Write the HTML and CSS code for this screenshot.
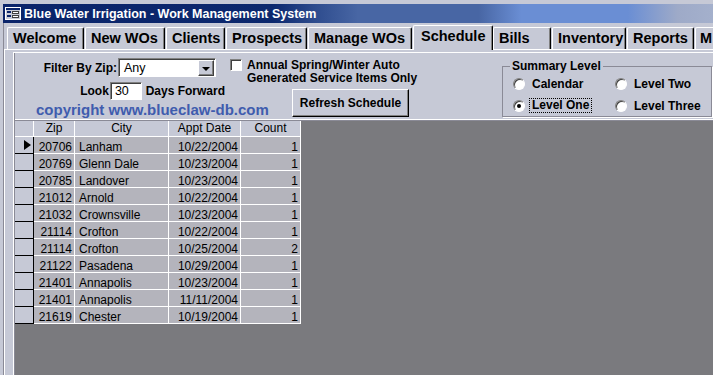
FILE: index.html
```html
<!DOCTYPE html>
<html lang="en">
<head>
  <meta charset="UTF-8" />
  <title>Blue Water Irrigation - Work Management System</title>
  <link rel="stylesheet" href="styles.css">
</head>
<body>
  <div class="window">
    <!-- Title bar -->
    <div class="titlebar">
      <svg class="app-icon" width="16" height="13" viewBox="0 0 16 13">
        <rect x="0.5" y="0.5" width="15" height="12" fill="#c8ccd8" stroke="#ffffff"/>
        <rect x="1" y="1" width="14" height="2" fill="#0a246a"/>
        <rect x="2" y="4" width="4" height="2" fill="#0a246a"/>
        <rect x="2" y="8" width="4" height="2" fill="#0a246a"/>
        <rect x="7.5" y="4.5" width="6" height="2" fill="#ffffff" stroke="#404040"/>
        <rect x="7.5" y="8.5" width="6" height="2" fill="#ffffff" stroke="#404040"/>
      </svg>
      <span class="title-text">Blue Water Irrigation - Work Management System</span>
    </div>

    <div class="client">
      <!-- Tabs -->
      <div class="tabs">
        <div class="tab tab-welcome">Welcome</div>
        <div class="tab tab-new">New WOs</div>
        <div class="tab tab-clients">Clients</div>
        <div class="tab tab-prospects">Prospects</div>
        <div class="tab tab-manage">Manage WOs</div>
        <div class="tab tab-schedule active">Schedule</div>
        <div class="tab tab-bills">Bills</div>
        <div class="tab tab-inventory">Inventory</div>
        <div class="tab tab-reports">Reports</div>
        <div class="tab tab-more">M</div>
      </div>

      <!-- Tab page -->
      <div class="panel">
        <div class="form">
          <div class="form-body">
            <div class="form-header">
              <div class="filters">
                <div class="field">
                  <span class="field-label">Filter By Zip:</span>
                  <div class="combo">
                    <span class="combo-value">Any</span>
                    <span class="combo-btn"><span class="arrow-down"></span></span>
                  </div>
                </div>
                <div class="field field-look">
                  <span class="field-label">Look</span>
                  <div class="textbox">30</div>
                  <span class="field-suffix">Days Forward</span>
                </div>
                <div class="copyright">copyright www.blueclaw-db.com</div>
              </div>

              <div class="options">
                <div class="check-row">
                  <span class="checkbox"></span>
                  <span class="check-label">Annual Spring/Winter Auto<br>Generated Service Items Only</span>
                </div>
                <button class="refresh-btn">Refresh Schedule</button>
              </div>

              <fieldset class="summary">
                <legend>Summary Level</legend>
                <div class="radio-grid">
                  <div class="radio-item"><span class="radio"></span><span>Calendar</span></div>
                  <div class="radio-item"><span class="radio"></span><span>Level Two</span></div>
                  <div class="radio-item"><span class="radio checked"></span><span class="focus">Level One</span></div>
                  <div class="radio-item"><span class="radio"></span><span>Level Three</span></div>
                </div>
              </fieldset>
            </div>

            <!-- Datasheet -->
            <div class="sheet-area">
              <table class="sheet">
                <colgroup>
                  <col class="c-sel"><col class="c-zip"><col class="c-city"><col class="c-date"><col class="c-count">
                </colgroup>
                <thead>
                  <tr><th class="sel"></th><th>Zip</th><th>City</th><th>Appt Date</th><th>Count</th></tr>
                </thead>
                <tbody>
                  <tr><td class="sel"><span class="cursor"></span></td><td class="num">20706</td><td>Lanham</td><td class="num">10/22/2004</td><td class="num">1</td></tr>
                  <tr><td class="sel"></td><td class="num">20769</td><td>Glenn Dale</td><td class="num">10/23/2004</td><td class="num">1</td></tr>
                  <tr><td class="sel"></td><td class="num">20785</td><td>Landover</td><td class="num">10/23/2004</td><td class="num">1</td></tr>
                  <tr><td class="sel"></td><td class="num">21012</td><td>Arnold</td><td class="num">10/22/2004</td><td class="num">1</td></tr>
                  <tr><td class="sel"></td><td class="num">21032</td><td>Crownsville</td><td class="num">10/23/2004</td><td class="num">1</td></tr>
                  <tr><td class="sel"></td><td class="num">21114</td><td>Crofton</td><td class="num">10/22/2004</td><td class="num">1</td></tr>
                  <tr><td class="sel"></td><td class="num">21114</td><td>Crofton</td><td class="num">10/25/2004</td><td class="num">2</td></tr>
                  <tr><td class="sel"></td><td class="num">21122</td><td>Pasadena</td><td class="num">10/29/2004</td><td class="num">1</td></tr>
                  <tr><td class="sel"></td><td class="num">21401</td><td>Annapolis</td><td class="num">10/23/2004</td><td class="num">1</td></tr>
                  <tr><td class="sel"></td><td class="num">21401</td><td>Annapolis</td><td class="num">11/11/2004</td><td class="num">1</td></tr>
                  <tr><td class="sel"></td><td class="num">21619</td><td>Chester</td><td class="num">10/19/2004</td><td class="num">1</td></tr>
                </tbody>
              </table>
            </div>
          </div>
        </div>
      </div>
    </div>
  </div>
</body>
</html>
```

FILE: styles.css
```css
/* ---- Global ---- */
html, body {
  margin: 0;
  padding: 0;
  overflow: hidden;
}
body {
  width: 713px;
  height: 375px;
  background: #c6c9d6;
  font-family: "Liberation Sans", Arial, sans-serif;
  color: #000;
}

.window {
  display: flex;
  flex-direction: column;
  height: 375px;
  padding-top: 4px;
  box-sizing: border-box;
}

/* ---- Title bar ---- */
.titlebar {
  display: flex;
  align-items: flex-start;
  height: 19px;
  margin-left: 3px;
  flex-shrink: 0;
  background: linear-gradient(90deg,
    #0a246a 0%, #0c286e 38%, #2e4c8e 44%, #4866a4 50%,
    #4866a4 67%, #6a8ed4 73%, #6a8ed4 88%, #9eaac8 95%, #a4b0cc 100%);
  color: #fff;
  font-weight: bold;
  font-size: 12.5px;
  white-space: nowrap;
}
.app-icon {
  margin: 3px 3px 0 2px;
  flex-shrink: 0;
}
.title-text {
  line-height: 19px;
  margin-top: 1px;
}

/* ---- Client area ---- */
.client {
  flex: 1;
  display: flex;
  flex-direction: column;
  margin-left: 3px;
  border-left: 1px solid #8a8a96;
}

/* ---- Tabs ---- */
.tabs {
  display: flex;
  align-items: flex-end;
  height: 24px;
  margin-top: 2px;
  padding-left: 3px;
  flex-shrink: 0;
}
.tab {
  flex-shrink: 0;
  height: 22px;
  box-sizing: border-box;
  padding: 2px 0 0 5px;
  margin-right: 1px;
  font-size: 14.5px;
  font-weight: bold;
  line-height: 16px;
  white-space: nowrap;
  overflow: hidden;
  background: #c6c9d6;
  border-top: 1px solid #fff;
  border-left: 1px solid #fff;
  border-right: 1px solid #000;
  border-radius: 2px 2px 0 0;
  box-shadow: inset -1px 0 0 #808080;
}
.tab.active {
  position: relative;
  height: 25px;
  margin-bottom: -1px;
  margin-right: 0;
  padding-left: 7px;
}
.tab-welcome   { width: 77px; }
.tab-new       { width: 80px; }
.tab-clients   { width: 59px; }
.tab-prospects { width: 81px; }
.tab-manage    { width: 104px; }
.tab-schedule  { width: 80px; }
.tab-bills     { width: 58px; }
.tab-inventory { width: 74px; }
.tab-reports   { width: 67px; }
.tab-more      { width: 20px; padding-left: 4px; border-right: 0; box-shadow: none; }

/* ---- Tab page ---- */
.panel {
  flex: 1;
  display: flex;
  flex-direction: column;
  border-top: 1px solid #fff;
  border-left: 1px solid #fff;
  padding: 2px 0 0 8px;
}
.form {
  flex: 1;
  display: flex;
  flex-direction: column;
  border-top: 1px solid #fff;
  border-left: 1px solid #fff;
}
.form-body {
  flex: 1;
  display: flex;
  flex-direction: column;
  border-left: 1px solid #8a8a96;
}

/* ---- Form header ---- */
.form-header {
  display: flex;
  height: 66px;
  flex-shrink: 0;
  border-bottom: 1px solid #fff;
  font-size: 12px;
  font-weight: bold;
}

.filters {
  width: 210px;
  padding-top: 5px;
  box-sizing: border-box;
  flex-shrink: 0;
}
.field {
  display: flex;
  align-items: center;
  height: 19px;
}
.field-look {
  height: 18px;
  margin-top: 5px;
}
.field-label {
  width: 102px;
  text-align: right;
  margin-right: 1px;
}
.field-suffix {
  margin-left: 4px;
  white-space: nowrap;
}

.combo {
  display: flex;
  align-items: flex-start;
  justify-content: space-between;
  width: 98px;
  height: 19px;
  box-sizing: border-box;
  background: #fff;
  border: 1px solid;
  border-color: #808080 #fff #fff #808080;
  box-shadow: inset 1px 1px 0 #404040;
}
.combo-value {
  font-weight: normal;
  font-size: 12.5px;
  line-height: 16px;
  padding: 1px 0 0 5px;
}
.combo-btn {
  display: flex;
  align-items: center;
  justify-content: center;
  width: 16px;
  height: 16px;
  box-sizing: border-box;
  margin: 1px 1px 0 0;
  background: #c6c9d6;
  border: 1px solid;
  border-color: #fff #404040 #404040 #fff;
  box-shadow: inset -1px -1px 0 #808080;
}
.arrow-down {
  width: 0;
  height: 0;
  border-top: 4px solid #000;
  border-left: 4px solid transparent;
  border-right: 4px solid transparent;
  margin: 1px 0 0 -1px;
}

.textbox {
  width: 34px;
  height: 18px;
  box-sizing: border-box;
  background: #fff;
  border: 1px solid;
  border-color: #808080 #fff #fff #808080;
  box-shadow: inset 1px 1px 0 #404040;
  font-weight: normal;
  font-size: 12.5px;
  line-height: 16px;
  padding-left: 4px;
}

.copyright {
  margin: 2px 0 0 21px;
  font-size: 15px;
  line-height: 16px;
  color: #3f5cae;
  white-space: nowrap;
}

.options {
  width: 277px;
  padding: 6px 0 0 5px;
  box-sizing: border-box;
  flex-shrink: 0;
}
.check-row {
  display: flex;
  align-items: flex-start;
}
.checkbox {
  width: 12px;
  height: 12px;
  box-sizing: border-box;
  background: #fff;
  border: 1px solid;
  border-color: #808080 #fff #fff #808080;
  box-shadow: inset 1px 1px 0 #404040;
  margin-right: 5px;
}
.check-label {
  line-height: 13px;
  white-space: nowrap;
}
.refresh-btn {
  display: block;
  width: 117px;
  height: 28px;
  margin: 4px 0 0 62px;
  padding: 0;
  font-family: inherit;
  font-size: 12px;
  font-weight: bold;
  color: #000;
  background: #c6c9d6;
  border: 1px solid;
  border-color: #fff #000 #000 #fff;
  box-shadow: inset -1px -1px 0 #808080;
}

/* ---- Summary level group ---- */
.summary {
  width: 210px;
  box-sizing: border-box;
  margin: 6px 0 0 0;
  padding: 0 0 0 10px;
  min-width: 0;
  height: 58px;
  border: 1px solid #8a8a96;
  box-shadow: 1px 1px 0 #fff;
}
.summary legend {
  padding: 0 2px;
  margin-left: -3px;
  line-height: 14px;
}
.radio-grid {
  display: grid;
  grid-template-columns: 102px auto;
  grid-auto-rows: 21px;
  row-gap: 1px;
}
.radio-item {
  display: flex;
  align-items: center;
  white-space: nowrap;
}
.radio {
  width: 12px;
  height: 12px;
  box-sizing: border-box;
  border-radius: 50%;
  background: #fff;
  border: 1px solid;
  border-color: #808080 #fff #fff #808080;
  box-shadow: inset 1px 1px 0 #404040;
  margin-right: 7px;
  display: flex;
  align-items: center;
  justify-content: center;
}
.radio.checked::after {
  content: "";
  width: 4px;
  height: 4px;
  border-radius: 50%;
  background: #000;
}
.focus {
  border: 1px dotted #000;
  padding: 0 2px;
  margin-left: -3px;
  line-height: 13px;
}

/* ---- Datasheet ---- */
.sheet-area {
  flex: 1;
  border-top: 1px solid #8a8a96;
  background: #7a7a7e;
}
.sheet {
  border-collapse: separate;
  border-spacing: 0;
  table-layout: fixed;
  width: 286px;
  font-size: 12px;
}
.c-sel   { width: 19px; }
.c-zip   { width: 41px; }
.c-city  { width: 94px; }
.c-date  { width: 72px; }
.c-count { width: 60px; }

.sheet th {
  padding: 0;
  font-weight: normal;
  line-height: 15px;
  background: #c6c9d6;
  border-right: 1px solid #fff;
  border-bottom: 1px solid #fff;
  text-align: center;
}
.sheet td {
  padding: 4px 2px 0 4px;
  line-height: 12px;
  background: #b4b4bc;
  border-right: 1px solid #fff;
  border-bottom: 1px solid #fff;
  white-space: nowrap;
  overflow: hidden;
}
.sheet td.num {
  text-align: right;
  padding-left: 0;
}
.sheet td.sel {
  padding: 0;
  background: #c6c9d6;
  border-right: 1px solid #000;
  border-bottom: 1px solid #000;
}
.cursor {
  display: block;
  width: 0;
  height: 0;
  margin-left: 9px;
  border-left: 7px solid #000;
  border-top: 5px solid transparent;
  border-bottom: 5px solid transparent;
}
```
